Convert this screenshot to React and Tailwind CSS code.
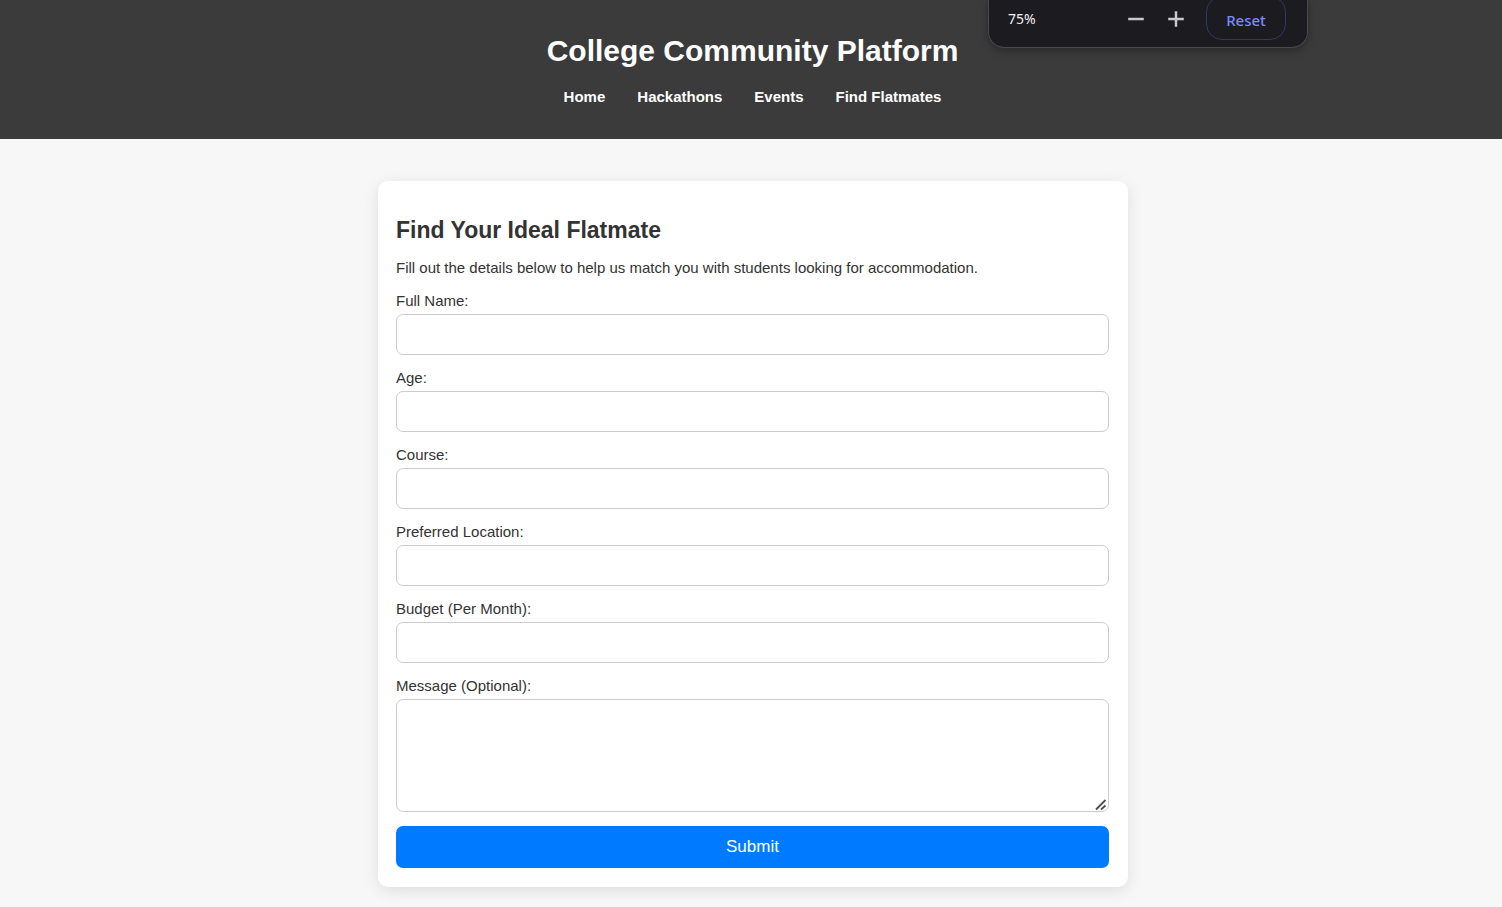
const links = ["Home", "Hackathons", "Events", "Find Flatmates"];

const fields = [
  { id: "name", label: "Full Name:", type: "text" },
  { id: "age", label: "Age:", type: "text" },
  { id: "course", label: "Course:", type: "text" },
  { id: "location", label: "Preferred Location:", type: "text" },
  { id: "budget", label: "Budget (Per Month):", type: "text" },
];

function ZoomIcon({ path }) {
  return (
    <svg
      aria-hidden="true"
      viewBox="0 0 20 20"
      className="size-5"
      fill="none"
      stroke="currentColor"
      strokeWidth="2.5"
    >
      <path d={path} />
    </svg>
  );
}

function ZoomPopup() {
  return (
    <div className="absolute top-0 right-[194px] flex h-12 w-80 items-start rounded-b-2xl border border-t-0 border-[#48484e] bg-[#1c1b20] pr-[21px] pl-[19px] font-['Noto_Sans',sans-serif] shadow-[0_3px_8px_rgba(0,0,0,0.3)]">
      <span className="mt-2 flex-1 text-sm leading-[22px] text-[#f0f0f4]">75%</span>
      <button type="button" aria-label="Zoom out" className="mt-[9px] mr-5 text-[#c8c8cc]">
        <ZoomIcon path="M2.2 10H17.8" />
      </button>
      <button type="button" aria-label="Zoom in" className="mt-[9px] mr-5 text-[#c8c8cc]">
        <ZoomIcon path="M2.2 10H17.8M10 2.2V17.8" />
      </button>
      <button
        type="button"
        className="-mt-1 h-11 w-20 rounded-2xl border border-[#33356f] pt-1 text-[15px] font-medium text-[#7b8af8]"
      >
        Reset
      </button>
    </div>
  );
}

export default function App() {
  return (
    <div className="relative min-h-screen bg-[#f7f7f7] pb-5 font-['Liberation_Sans',Arial,sans-serif] text-[15px] text-[#333]">
      <header className="bg-[#3b3b3b] pt-8 pb-8 pl-[3px] text-center text-white">
        <h1 className="text-3xl leading-[38px] font-bold">College Community Platform</h1>
        <nav className="mt-[17px] flex justify-center gap-8 pb-px leading-[19px] font-bold">
          {links.map((link) => (
            <a key={link} href="#">
              {link}
            </a>
          ))}
        </nav>
      </header>
      <ZoomPopup />

      <div className="pt-[42px] pl-1">
        <main className="mx-auto max-w-[750px] rounded-[10px] bg-white pt-9 pr-[19px] pb-[19px] pl-[18px] shadow-[0_4px_16px_rgba(0,0,0,0.1)]">
          <h2 className="text-[23px] leading-[26px] font-bold">Find Your Ideal Flatmate</h2>
          <p className="mt-4 leading-[18px]">
            Fill out the details below to help us match you with students looking for accommodation.
          </p>
          <form className="mt-[15px] flex flex-col gap-[14px]">
            {fields.map((field) => (
              <div key={field.id} className="flex flex-col gap-1">
                <label htmlFor={field.id} className="leading-[18px]">
                  {field.label}
                </label>
                <input
                  id={field.id}
                  type={field.type}
                  className="h-[41px] w-full rounded-[7px] border border-[#ccc] bg-white px-3"
                />
              </div>
            ))}
            <div className="relative flex flex-col gap-1">
              <label htmlFor="message" className="leading-[18px]">
                Message (Optional):
              </label>
              <textarea
                id="message"
                className="h-[113px] w-full resize-y rounded-[7px] border border-[#ccc] bg-white p-3 [&::-webkit-resizer]:hidden"
              />
              <svg
                aria-hidden="true"
                viewBox="0 0 12 12"
                className="pointer-events-none absolute right-0.5 bottom-px size-3 text-[#4d4d4d]"
                fill="none"
                stroke="currentColor"
                strokeWidth="1.8"
              >
                <path d="M1 10.5 10.5 1M6 10.5 10.5 6.5" />
              </svg>
            </div>
            <button type="submit" className="h-[42px] rounded-[7px] bg-[#007bff] text-[17px] text-white">
              Submit
            </button>
          </form>
        </main>
      </div>
    </div>
  );
}
